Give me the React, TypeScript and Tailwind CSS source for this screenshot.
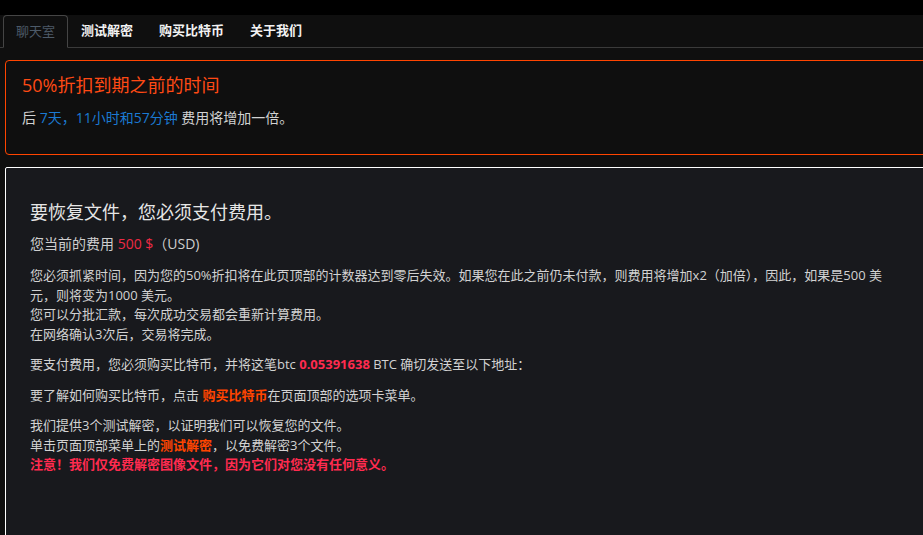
export default function App() {
  const tabs = ['聊天室', '测试解密', '购买比特币', '关于我们'];

  return (
    <div
      className="h-[535px] w-[923px] overflow-hidden bg-[#0f0f0f] text-[#d2d2d2]"
      style={{ fontFamily: '"Open Sans", "Noto Sans CJK SC", sans-serif' }}
    >
      <div className="h-[15px] bg-black" />

      {/* tabs */}
      <div className="flex border-b border-[#3a3a3a] pl-[3px]">
        {tabs.map((t, i) =>
          i === 0 ? (
            <div
              key={t}
              className="-mb-px flex h-[33px] items-center rounded-t border border-[#454545] border-b-[#0f0f0f] bg-[#0f0f0f] px-3 text-[13px] text-[#4d5a68]"
            >
              {t}
            </div>
          ) : (
            <div
              key={t}
              className="flex h-[32px] items-center border border-transparent px-3 text-[13px] font-semibold text-[#f2f2f2]"
            >
              {t}
            </div>
          )
        )}
      </div>

      {/* countdown */}
      <div className="ml-[5px] mt-3 h-[95px] w-[940px] rounded border border-[#ff4500] px-4 pt-[11px]">
        <div className="text-[18px] leading-[26px] text-[#ff4a14]">50%折扣到期之前的时间</div>
        <div className="mt-[10px] text-[14px] leading-[20px]">
          后 <span className="text-[#1b7ad2]">7天，11小时和57分钟</span> 费用将增加一倍。
        </div>
      </div>

      {/* payment info */}
      <div className="ml-[5px] mt-3 h-[400px] w-[940px] rounded-[2px] border border-white bg-[#18191d] px-6 pt-[31px] text-[13px] leading-[19.5px]">
        <div className="text-[18px] leading-[26px] text-[#e6e6e6]">要恢复文件，您必须支付费用。</div>
        <div className="mt-[9px] text-[14px] leading-[20px] text-[#cfcfcf]">
          您当前的费用 <span className="text-[#ee2a44]">500 $</span>（USD)
        </div>
        <p className="mt-[12px] w-[862px]">
          您必须抓紧时间，因为您的50%折扣将在此页顶部的计数器达到零后失效。如果您在此之前仍未付款，则费用将增加x2（加倍），因此，如果是500 美元，则将变为1000 美元。
          <br />
          您可以分批汇款，每次成功交易都会重新计算费用。
          <br />
          在网络确认3次后，交易将完成。
        </p>
        <p className="mt-[11px]">
          要支付费用，您必须购买比特币，并将这笔btc{' '}
          <span className="font-bold text-[#ff2b4f]">0.05391638</span> BTC 确切发送至以下地址：
        </p>
        <p className="mt-[11px]">
          要了解如何购买比特币，点击 <span className="font-bold text-[#ff4500]">购买比特币</span>在页面顶部的选项卡菜单。
        </p>
        <p className="mt-[11px]">
          我们提供3个测试解密，以证明我们可以恢复您的文件。
          <br />
          单击页面顶部菜单上的<span className="font-bold text-[#ff4500]">测试解密</span>，以免费解密3个文件。
          <br />
          <span className="font-bold text-[#ff2b4f]">注意！我们仅免费解密图像文件，因为它们对您没有任何意义。</span>
        </p>
      </div>
    </div>
  );
}
